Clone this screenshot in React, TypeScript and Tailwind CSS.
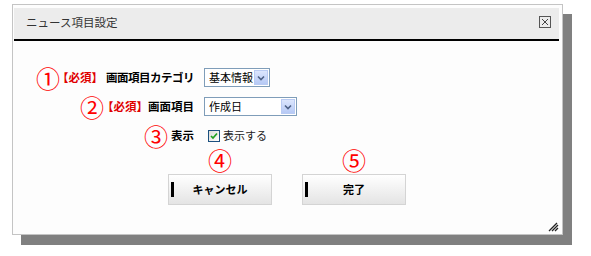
import React from 'react';

const jp = "font-['Noto_Sans_CJK_JP','Noto_Sans',sans-serif]";

const Circled: React.FC<{ n: string; className?: string }> = ({ n, className = '' }) => (
  <span className={`text-[24px] leading-none font-normal text-[#ff0000] ${className}`}>{n}</span>
);

const Required: React.FC<{ className?: string }> = ({ className = '' }) => (
  <span className={`text-[#e00000] font-bold ${className}`}>【必須】</span>
);

const SelectBox: React.FC<{ value: string; width: string }> = ({ value, width }) => (
  <div className={`${width} h-[19px] flex items-stretch border border-[#7f9db9] bg-white p-[1px]`}>
    <span className="flex-1 pl-[3px] text-[11px] leading-[15px] text-black whitespace-nowrap overflow-hidden">{value}</span>
    <span className="w-[14px] flex items-center justify-center bg-gradient-to-b from-[#dce6fd] to-[#b6c9f5] border border-[#b9cbf3]">
      <svg width="8" height="6" viewBox="0 0 8 6">
        <path d="M1 1.5 L4 4.5 L7 1.5" stroke="#4d6185" strokeWidth="1.6" fill="none" />
      </svg>
    </span>
  </div>
);

const Button: React.FC<{ label: string }> = ({ label }) => (
  <button className="w-[104px] h-[31px] flex items-center border border-[#d4d4d4] bg-gradient-to-b from-white to-[#e4e4e4] pl-[2px]">
    <span className="w-[3px] h-[15px] bg-black" />
    <span className="flex-1 text-center text-[11px] font-bold text-black pr-[5px]">{label}</span>
  </button>
);

export default function App() {
  return (
    <div className={`w-[591px] h-[256px] bg-white overflow-hidden pt-[4px] pl-[12px] ${jp}`}>
      <div className="relative w-[551px] h-[231px] border border-[#c4c4c4] bg-[#fdfdfd] shadow-[9px_10px_0_#808080] pt-[3px] pl-[1px] pr-[3px]">
        {/* title bar */}
        <div className="h-[33px] bg-[#ececec] border-b-2 border-black flex items-center justify-between pl-[12px] pr-[8px]">
          <span className="text-[11.5px] text-[#333] -mt-[2px]">ニュース項目設定</span>
          <span className="w-[12px] h-[12px] border border-[#555] flex items-center justify-center -mt-[3px]">
            <svg width="8" height="8" viewBox="0 0 8 8">
              <path d="M1 1 L7 7 M7 1 L1 7" stroke="#444" strokeWidth="1" />
            </svg>
          </span>
        </div>

        {/* form */}
        <div className="pt-[27px] flex flex-col gap-[10px] text-[11.5px]">
          <div className="flex items-center h-[19px]">
            <div className="w-[180px] flex items-center justify-end font-bold text-black">
              <Circled n="①" className="-mr-[3px]" />
              <Required />
              <span className="ml-[3px] tracking-[-0.5px]">画面項目カテゴリ</span>
            </div>
            <div className="ml-[10px]">
              <SelectBox value="基本情報" width="w-[66px]" />
            </div>
          </div>
          <div className="flex items-center h-[19px]">
            <div className="w-[180px] flex items-center justify-end font-bold text-black">
              <Circled n="②" className="-mr-[2px]" />
              <Required />
              <span>画面項目</span>
            </div>
            <div className="ml-[10px]">
              <SelectBox value="作成日" width="w-[93px]" />
            </div>
          </div>
          <div className="flex items-center h-[19px]">
            <div className="w-[180px] flex items-center justify-end font-bold text-black">
              <Circled n="③" className="mr-[3px]" />
              <span>表示</span>
            </div>
            <div className="ml-[14px] flex items-center gap-[3px]">
              <span className="w-[12px] h-[12px] border border-[#1c5180] bg-gradient-to-br from-[#dcdcd7] to-white flex items-center justify-center">
                <svg width="8" height="8" viewBox="0 0 8 8">
                  <path d="M1 4 L3 6 L7 1.5" stroke="#21a121" strokeWidth="1.7" fill="none" />
                </svg>
              </span>
              <span className="text-[#222] text-[11px]">表示する</span>
            </div>
          </div>
        </div>

        {/* buttons */}
        <div className="flex gap-[30px] pl-[154px] mt-[3px]">
          <div className="flex flex-col items-center gap-[2px]">
            <Circled n="④" />
            <Button label="キャンセル" />
          </div>
          <div className="flex flex-col items-center gap-[2px]">
            <Circled n="⑤" />
            <Button label="完了" />
          </div>
        </div>

        {/* resize grip */}
        <svg className="absolute right-[3px] bottom-[2px]" width="11" height="10" viewBox="0 0 11 10">
          <path d="M1 9 L9 1 M4 9 L10 3 M7 9 L10 6" stroke="#222" strokeWidth="1.3" />
        </svg>
      </div>
    </div>
  );
}
